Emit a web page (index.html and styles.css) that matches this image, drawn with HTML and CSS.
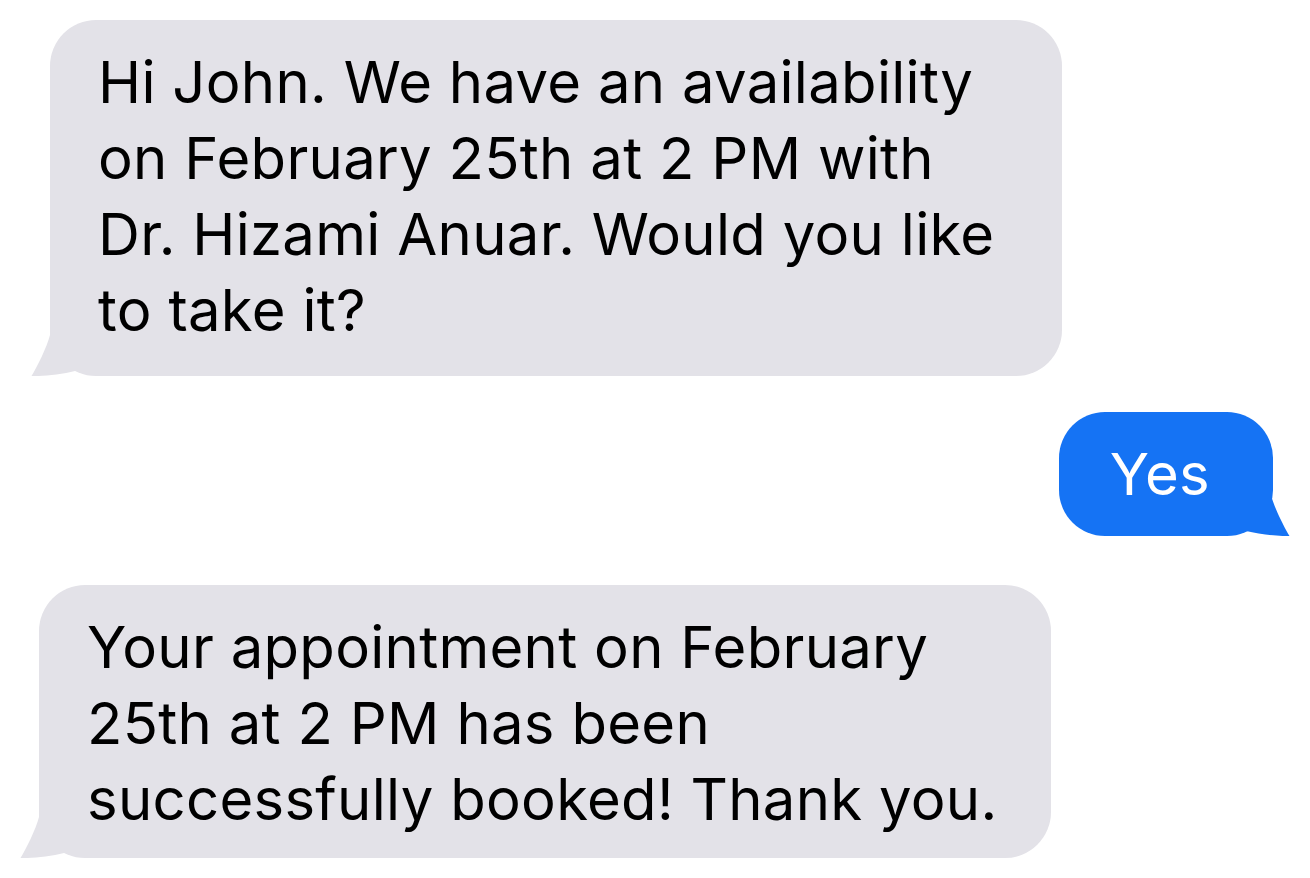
FILE: index.html
```html
<!DOCTYPE html>
<html>
<head>
  <title>Messages</title>
  <link rel="stylesheet" href="styles.css">
</head>
<body>
  <div class="thread">
    <div class="bubble in first">
      Hi John. We have an availability<br>
      on February 25th at 2 PM with<br>
      Dr. Hizami Anuar. Would you like<br>
      to take it?
      <svg class="tail" viewBox="0 0 46 45" width="46" height="45">
        <path d="M19 0 L19 4 C16 16 6 36 0.5 45 C10 45.5 30 43.5 44 40 L46 40 L46 0 Z" />
      </svg>
    </div>

    <div class="bubble out">
      Yes
      <svg class="tail" viewBox="0 0 46 45" width="46" height="45">
        <path d="M19 0 L19 4 C16 16 6 36 0.5 45 C10 45.5 30 43.5 44 40 L46 40 L46 0 Z" />
      </svg>
    </div>

    <div class="bubble in last">
      Your appointment on February<br>
      25th at 2 PM has been<br>
      successfully booked! Thank you.
      <svg class="tail" viewBox="0 0 46 45" width="46" height="45">
        <path d="M19 0 L19 4 C16 16 6 36 0.5 45 C10 45.5 30 43.5 44 40 L46 40 L46 0 Z" />
      </svg>
    </div>
  </div>
</body>
</html>
```

FILE: styles.css
```css
:root {
  --incoming: #E3E2E8;
  --outgoing: #1573F4;
  --text: #000000;
}

body {
  margin: 0;
  background: white;
  font-family: 'Inter', 'Noto Sans', sans-serif;
  color: var(--text);
}

.thread {
  display: flex;
  flex-direction: column;
  padding: 20px 37px 0 0;
}

.bubble {
  position: relative;
  box-sizing: border-box;
  border-radius: 46px;
  padding: 24px 48px;
  font-size: 58px;
  line-height: 76px;
  letter-spacing: 0.3px;
}

.bubble .tail {
  position: absolute;
  bottom: 0;
}

/* Incoming (grey) */
.bubble.in {
  align-self: flex-start;
  width: 1012px;
  background: var(--incoming);
}

.bubble.in .tail {
  left: -19px;
  fill: var(--incoming);
}

.bubble.first {
  margin-left: 50px;
  padding-bottom: 28px;
}

.bubble.last {
  margin-top: 49px;
  margin-left: 39px;
  padding-bottom: 21px;
}

/* Outgoing (blue) */
.bubble.out {
  align-self: flex-end;
  margin-top: 36px;
  padding: 24px 63px 24px 51px;
  background: var(--outgoing);
  color: white;
}

.bubble.out .tail {
  right: -17px;
  fill: var(--outgoing);
  transform: scaleX(-1);
}
```
